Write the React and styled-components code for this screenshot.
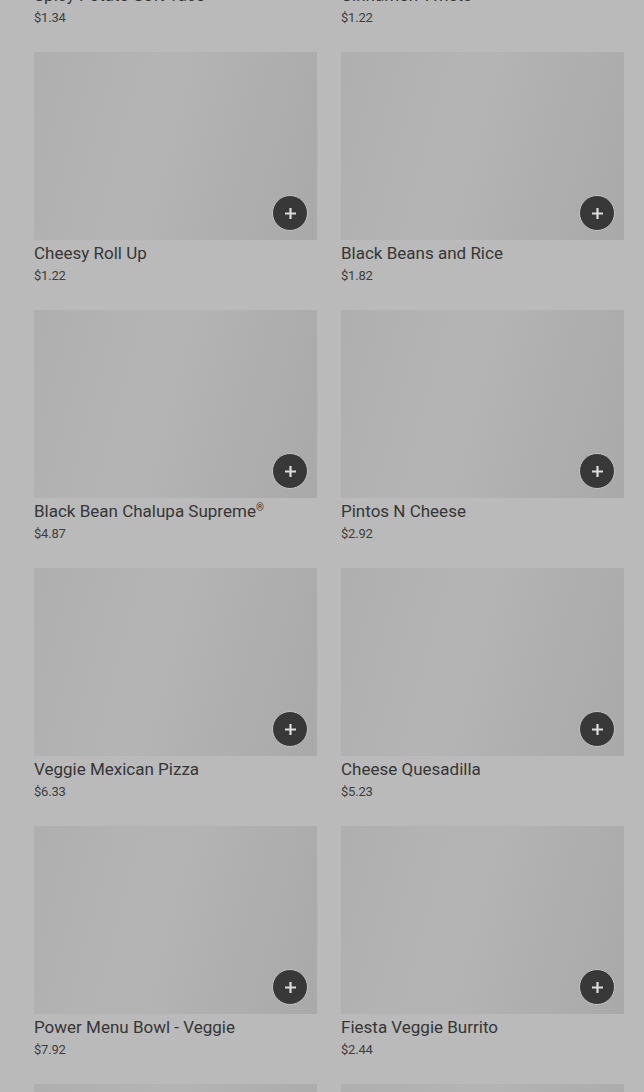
import React from "react";
import styled, { createGlobalStyle } from "styled-components";

const Global = createGlobalStyle`
  html, body { margin: 0; padding: 0; background: #bababa; overflow: hidden; }
  body { font-family: Roboto, "Noto Sans", "Liberation Sans", sans-serif; }
`;

const Page = styled.div`
  height: 1092px;
  overflow: hidden;
  background: #bababa;
`;

const Grid = styled.div`
  display: grid;
  grid-template-columns: 283px 283px;
  column-gap: 24px;
  row-gap: 24px;
  padding: 0 20px 0 34px;
  margin-top: -206px;
`;

const Card = styled.div`
  display: flex;
  flex-direction: column;
`;

const Thumb = styled.div`
  position: relative;
  height: 188px;
  background: linear-gradient(105deg, #afafaf 0%, #b3b3b3 30%, #b4b4b4 45%, #afafaf 70%, #a9a9a9 100%);
`;

const AddButton = styled.button`
  position: absolute;
  right: 9px;
  bottom: 9px;
  width: 36px;
  height: 36px;
  border-radius: 50%;
  background: #383838;
  border: 1px solid #c4c4c4;
  padding: 0;
  display: flex;
  align-items: center;
  justify-content: center;
  cursor: pointer;
`;

const Title = styled.div`
  font-size: 17px;
  line-height: 26px;
  color: #363636;
  font-weight: 400;
  white-space: nowrap;
`;

const Mark = styled.span`
  font-size: 10px;
  vertical-align: 6px;
  line-height: 0;
`;

const Price = styled.div`
  font-size: 13px;
  line-height: 20px;
  color: #3e3e3e;
  font-weight: 400;
  letter-spacing: -0.2px;
`;

const items = [
  ["Spicy Potato Soft Taco", "$1.34"],
  ["Cinnamon Twists", "$1.22"],
  ["Cheesy Roll Up", "$1.22"],
  ["Black Beans and Rice", "$1.82"],
  ["Black Bean Chalupa Supreme®", "$4.87"],
  ["Pintos N Cheese", "$2.92"],
  ["Veggie Mexican Pizza", "$6.33"],
  ["Cheese Quesadilla", "$5.23"],
  ["Power Menu Bowl - Veggie", "$7.92"],
  ["Fiesta Veggie Burrito", "$2.44"],
  ["Bean Burrito", "$1.82"],
  ["Black Bean Crunchwrap Supreme®", "$4.97"],
];

const renderName = (name) =>
  name.endsWith("®") ? (
    <>
      {name.slice(0, -1)}
      <Mark>®</Mark>
    </>
  ) : (
    name
  );

const Plus = () => (
  <svg width="13" height="13" viewBox="0 0 13 13">
    <path d="M6.5 1v11M1 6.5h11" stroke="#dcdcdc" strokeWidth="2.2" strokeLinecap="butt" />
  </svg>
);

export default function App() {
  return (
    <Page>
      <Global />
      <Grid>
        {items.map(([name, price]) => (
          <Card key={name}>
            <Thumb>
              <AddButton aria-label={`Add ${name}`}>
                <Plus />
              </AddButton>
            </Thumb>
            <Title>{renderName(name)}</Title>
            <Price>{price}</Price>
          </Card>
        ))}
      </Grid>
    </Page>
  );
}
